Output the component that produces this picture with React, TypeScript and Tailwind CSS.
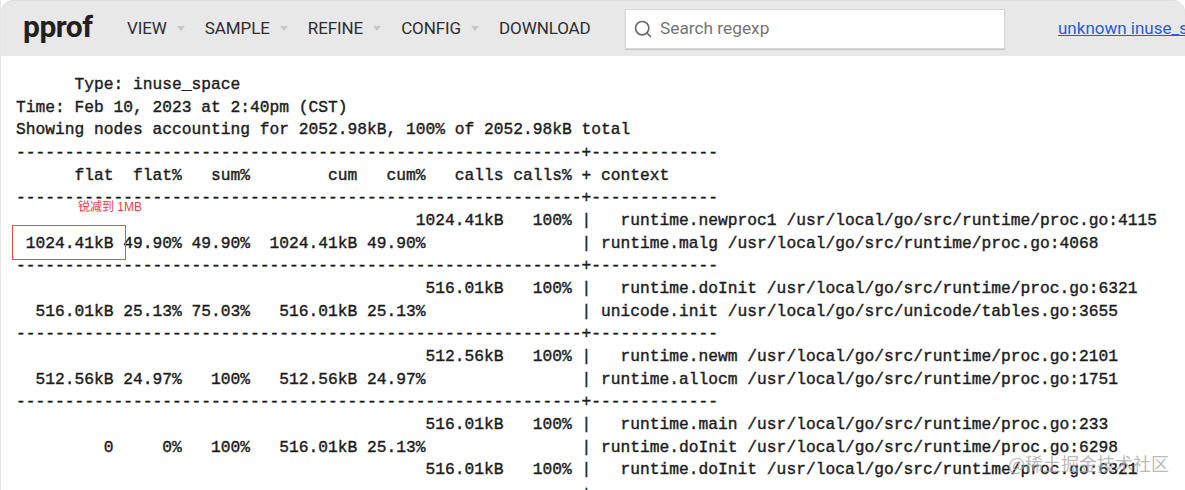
import { Search } from 'lucide-react';

const DASH = '-'.repeat(58) + '+' + '-'.repeat(13);
const pad = ' '.repeat(41);

const report = [
  '      Type: inuse_space',
  'Time: Feb 10, 2023 at 2:40pm (CST)',
  'Showing nodes accounting for 2052.98kB, 100% of 2052.98kB total',
  DASH,
  '      flat  flat%   sum%        cum   cum%   calls calls% + context',
  DASH,
  pad + '1024.41kB   100% |   runtime.newproc1 /usr/local/go/src/runtime/proc.go:4115',
  ' 1024.41kB 49.90% 49.90%  1024.41kB 49.90%                | runtime.malg /usr/local/go/src/runtime/proc.go:4068',
  DASH,
  pad + ' 516.01kB   100% |   runtime.doInit /usr/local/go/src/runtime/proc.go:6321',
  '  516.01kB 25.13% 75.03%   516.01kB 25.13%                | unicode.init /usr/local/go/src/unicode/tables.go:3655',
  DASH,
  pad + ' 512.56kB   100% |   runtime.newm /usr/local/go/src/runtime/proc.go:2101',
  '  512.56kB 24.97%   100%   512.56kB 24.97%                | runtime.allocm /usr/local/go/src/runtime/proc.go:1751',
  DASH,
  pad + ' 516.01kB   100% |   runtime.main /usr/local/go/src/runtime/proc.go:233',
  '         0     0%   100%   516.01kB 25.13%                | runtime.doInit /usr/local/go/src/runtime/proc.go:6298',
  pad + ' 516.01kB   100% |   runtime.doInit /usr/local/go/src/runtime/proc.go:6321',
  DASH,
];

const menus = [
  { label: 'VIEW', arrow: true },
  { label: 'SAMPLE', arrow: true },
  { label: 'REFINE', arrow: true },
  { label: 'CONFIG', arrow: true },
  { label: 'DOWNLOAD', arrow: false },
];

function Header() {
  return (
    <div className="h-[56px] shrink-0 flex items-center bg-[#e8e8e8] rounded-t-[12px] border-t border-[#dcdcdc] overflow-hidden whitespace-nowrap">
      <div className="ml-[22px] w-[70px] shrink-0 text-[30px] font-bold tracking-[-0.5px] text-[#212121] font-['Roboto',sans-serif] leading-none pb-[4px]">
        pprof
      </div>
      <div className="ml-[34px] flex items-center gap-[20px] w-[498px] shrink-0 font-['Roboto',sans-serif] text-[17px] tracking-[-0.1px] text-[#2e2e2e]">
        {menus.map(m => (
          <div key={m.label} className="flex items-center gap-[10px]">
            <span>{m.label}</span>
            {m.arrow && (
              <span className="w-0 h-0 border-x-[4px] border-x-transparent border-t-[5px] border-t-[#c8c8c8]" />
            )}
          </div>
        ))}
      </div>
      <div className="w-[380px] h-[40px] shrink-0 flex items-center gap-[7px] pl-[7px] bg-white border border-[#d6d6d6] shadow-[0_1px_1px_rgba(0,0,0,0.12)]">
        <Search size={20} strokeWidth={2} className="text-[#6a6a6a]" />
        <span className="font-['Roboto',sans-serif] text-[17.3px] text-[#757575]">Search regexp</span>
      </div>
      <div className="ml-[53px] shrink-0 font-['Roboto',sans-serif] text-[17px] text-[#2a5bd7] underline">unknown inuse_space</div>
    </div>
  );
}

export default function App() {
  return (
    <div className="relative w-[1185px] h-[490px] flex flex-col overflow-hidden bg-white border-l border-[#e4e4e4]">
      <Header />
      <pre className="pl-[15px] pt-[18px] font-['Liberation_Mono',monospace] text-[16.25px] leading-[22.65px] text-[#1c1c1c] [-webkit-text-stroke:0.4px_#1c1c1c]">
        {report.join('\n')}
      </pre>

      {/* annotation */}
      <div className="absolute left-[11px] top-[225px] w-[114px] h-[35px] border border-[#e2514f]" />
      <div className="absolute left-[77px] top-[200px] text-[12px] leading-[14px] text-[#e2433f] font-['Liberation_Sans','Noto_Sans_CJK_SC',sans-serif]">
        锐减到 1MB
      </div>

      {/* watermark */}
      <div className="absolute left-[1007px] top-[452px] text-[18px] leading-[22px] text-[#a8a8a8]/80 font-['Noto_Sans_CJK_SC',sans-serif] whitespace-nowrap">
        @稀土掘金技术社区
      </div>
    </div>
  );
}
